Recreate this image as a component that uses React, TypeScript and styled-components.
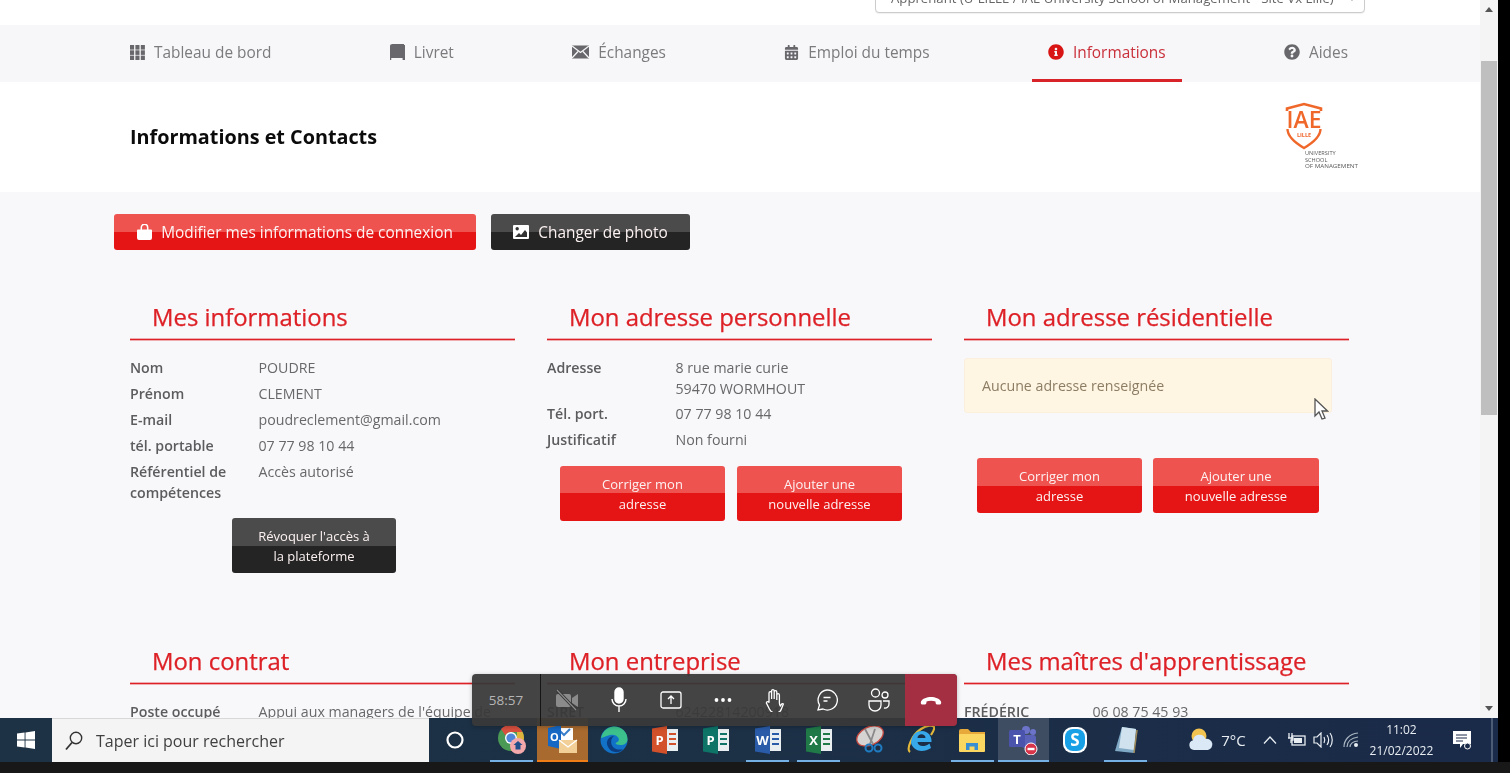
import React from "react";
import styled, { createGlobalStyle } from "styled-components";
import { FaCalendarAlt, FaInfoCircle, FaQuestionCircle } from "react-icons/fa";

const Global = createGlobalStyle`
  html, body { margin: 0; padding: 0; background: #181818; }
  * { box-sizing: border-box; }
  body { font-family: "Open Sans", "Liberation Sans", sans-serif; }
`;

const Stage = styled.div`
  position: relative; width: 1510px; height: 773px; overflow: hidden; background: #181818;
  display: flex; flex-direction: column;
`;
const Screen = styled.div`
  height: 762px; width: 100%; background: #000; flex: none; filter: blur(0.35px);
`;
const Monitor = styled.div`
  width: 1498px; height: 762px; display: flex; flex-direction: column;
`;
const Browser = styled.div`
  height: 718px; display: flex; flex: none; overflow: hidden;
`;
const Page = styled.div`
  width: 1480px; background: #f8f7f9; display: flex; flex-direction: column; overflow: hidden;
`;
const ScrollBar = styled.div`
  width: 18px; background: #f4f4f4; display: flex; flex-direction: column; align-items: stretch; padding-top: 7px;
`;
const Arrow = styled.div<{ $down?: boolean }>`
  width: 0; height: 0; margin: 0 auto; border-left: 4px solid transparent; border-right: 4px solid transparent;
  ${p => p.$down ? "border-top: 5px solid #555; margin-top: auto; margin-bottom: 7px;" : "border-bottom: 5px solid #555;"}
`;
const Thumb = styled.div`
  height: 354px; margin: 49px 1px 0; background: #bfbfbf;
`;
const TopStrip = styled.div`
  height: 25px; flex: none; background: #fff; display: flex; justify-content: flex-end; padding-right: 115px; overflow: hidden;
`;
const SelectBox = styled.div`
  width: 490px; height: 33px; margin-top: -20px; border: 1px solid #ccc; border-radius: 4px; background: #fff;
  display: flex; align-items: center; justify-content: space-between; padding: 3px 8px 0 15px;
  font-size: 13.2px; color: #666; white-space: nowrap; box-shadow: 0 1px 1px rgba(0,0,0,.06);
`;
const Nav = styled.nav`
  height: 57px; flex: none; background: #f7f6f8; display: flex; justify-content: space-between; padding: 0 116px 0 114px;
`;
const NavItem = styled.div<{ $active?: boolean }>`
  height: 57px; padding: 0 16px; display: flex; align-items: center; gap: 9px; font-size: 15.4px; white-space: nowrap;
  color: ${p => (p.$active ? "#c9303a" : "#7b7b7f")};
  border-bottom: 3px solid ${p => (p.$active ? "#d9232a" : "transparent")};
  & > svg { flex: none; color: ${p => (p.$active ? "#d81414" : "#68686c")}; }
`;
const HeaderBand = styled.header`
  height: 110px; flex: none; background: #fff; display: flex; align-items: center; justify-content: space-between;
  padding: 0 120px 0 130px;
`;
const Title = styled.h1`
  margin: 0; font-size: 19.8px; font-weight: 700; color: #0b0b0b; line-height: 1;
`;
const Main = styled.main`
  padding: 22px 0 0 114px; display: flex; flex-direction: column;
`;
const ActionRow = styled.div`
  display: flex; gap: 15px; height: 36px; flex: none;
`;
const splitBg = (dark?: boolean) =>
  dark
    ? "linear-gradient(#4b4b4b 0 50%, #242424 50% 100%)"
    : "linear-gradient(#ee5350 0 50%, #e51515 50% 100%)";
const WideButton = styled.div<{ $dark?: boolean; $w: number }>`
  width: ${p => p.$w}px; height: 36px; border-radius: 3px; background: ${p => splitBg(p.$dark)};
  display: flex; align-items: center; justify-content: center; gap: 9px;
  color: #fdf2f2; font-size: 15.4px; white-space: nowrap;
`;
const StackButton = styled.div<{ $dark?: boolean; $w?: number }>`
  width: ${p => p.$w ?? 165}px; height: 55px; border-radius: 3px; background: ${p => splitBg(p.$dark)};
  display: flex; flex-direction: column; align-items: center; justify-content: center;
  color: #fdf2f2; font-size: 13px; line-height: 20px; text-align: center;
`;
const Sections = styled.div<{ $top: number; $h?: number }>`
  margin: ${p => p.$top}px 0 0 16px; display: grid; grid-template-columns: repeat(3, 385px); column-gap: 32px;
  ${p => (p.$h ? `height: ${p.$h}px;` : "")} flex: none;
`;
const Column = styled.section`
  display: flex; flex-direction: column;
`;
const Heading = styled.h2`
  margin: 0; height: 46px; padding: 0 0 0 22px; font-size: 23.9px; font-weight: 400; line-height: 46px; color: #dd2127;
  -webkit-text-stroke: 0.25px #dd2127;
  border-bottom: 1px solid #dd2127; box-shadow: 0 1px 0 rgba(221,33,39,.35), inset 0 -1px 0 rgba(221,33,39,.35);
  white-space: nowrap;
`;
const Rows = styled.dl`
  margin: 17px 0 0; display: grid; grid-template-columns: 128.5px 1fr; row-gap: 5px; font-size: 14.2px; line-height: 21px;
`;
const Label = styled.dt`
  font-weight: 600; color: #5c5c5e; margin: 0;
`;
const Value = styled.dd<{ $tight?: boolean }>`
  margin: 0 0 ${p => (p.$tight ? "-1px" : "0")}; color: #68686a; white-space: nowrap;
`;
const ButtonRow = styled.div<{ $top: number; $left: number; $gap?: number }>`
  display: flex; gap: ${p => p.$gap ?? 11}px; margin: ${p => p.$top}px 0 0 ${p => p.$left}px;
`;
const Notice = styled.div`
  width: 368px; height: 55px; margin-top: 18px; padding: 0 17px 1px; background: #fff5e3; border: 1px solid #fbf0dc; border-radius: 3px;
  display: flex; align-items: center; font-size: 14.2px; color: #8c7d63;
`;
const Cursor = styled.svg`
  position: absolute; left: 1314px; top: 398px; width: 15px; height: 23px;
`;
const Taskbar = styled.footer`
  height: 44px; flex: none; display: flex; align-items: stretch;
  background: linear-gradient(90deg, #1d3244 0%, #1c3046 50%, #1a2a49 100%); position: relative;
`;
const StartCell = styled.div`
  width: 52px; display: flex; align-items: center; justify-content: center;
`;
const Search = styled.div`
  width: 377px; background: #f4f4f4; border-top: 1px solid #d8d8d8; display: flex; align-items: center; gap: 13px; padding-left: 13px;
  font-size: 16px; color: #3f3f3f; white-space: nowrap;
`;
const TaskSlot = styled.div<{ $state?: "run" | "act" | "hot"; $w?: number; $mr?: number }>`
  width: ${p => p.$w ?? 51.2}px; margin-right: ${p => p.$mr ?? 0}px; flex: none; display: flex; align-items: center; justify-content: center;
  ${p => p.$state === "run" ? "background: linear-gradient(#76b1e6, #76b1e6) bottom center / 43px 2px no-repeat;" : ""}
  ${p => p.$state === "act" ? "background: #a86a2e; box-shadow: inset 0 -2px 0 #f07d16;" : ""}
  ${p => p.$state === "hot" ? "background: #3e4d62; box-shadow: inset 0 -2px 0 #76b1e6;" : ""}
`;
const TrayCell = styled.div<{ $w: number; $ml?: number }>`
  width: ${p => p.$w}px; margin-left: ${p => p.$ml ?? 0}px; flex: none; display: flex; align-items: center; justify-content: center;
  color: #e8edf2; font-size: 15px; white-space: nowrap;
`;
const Clock = styled.div`
  display: flex; flex-direction: column; align-items: center; font-size: 12px; line-height: 21px; color: #e8edf2; white-space: nowrap;
`;
const EdgeLine = styled.div`
  position: absolute; right: 5px; top: 0; bottom: 0; width: 2px; background: #4d5c75;
`;
const CallBar = styled.div`
  position: absolute; left: 472px; top: 674px; width: 485px; height: 52px; border-radius: 4px; overflow: hidden;
  background: rgba(56, 56, 56, 0.94); display: flex; align-items: stretch; color: #fff;
  box-shadow: 0 1px 4px rgba(0,0,0,.25);
`;
const Timer = styled.div`
  width: 69px; border-right: 1px solid #151515; display: flex; align-items: center; justify-content: center; font-size: 13.5px; font-weight: 400; color: #b5b5b5; flex: none;
`;
const CallButton = styled.div`
  width: 52px; flex: none; display: flex; align-items: center; justify-content: center;
`;
const CallIcons = styled.div`
  flex: 1; display: flex;
`;
const Hangup = styled.div`
  width: 52px; flex: none; background: #a52f42; display: flex; align-items: center; justify-content: center;
`;

const ThIcon = () => (
  <svg width="15" height="15" viewBox="0 0 15 15" fill="currentColor">
    {[0, 5.4, 10.8].map(x => [0, 5.3, 10.6].map(y => <rect key={`${x}-${y}`} x={x} y={y} width="4.1" height="4.6" />))}
  </svg>
);
const BookIcon = () => (
  <svg width="15" height="16" viewBox="0 0 15 16" fill="currentColor">
    <path d="M0 2C0 .8 1 0 2.500 0H14v14H2.500C1.500 14 1 14.300 1 15s.5 1 1.500 1H0z" />
    <rect x="12.600" y="1" width="2.400" height="15" />
  </svg>
);
const MailIcon = () => (
  <svg width="17" height="14" viewBox="0 0 17 14">
    <rect y="0.5" width="17" height="13" fill="currentColor" />
    <path d="M0 1l8.500 6.500L17 1M0 13l6-6.500M17 13l-6-6.500" stroke="#f7f6f8" strokeWidth="1.300" fill="none" />
  </svg>
);
const BagIcon = () => (
  <svg width="15" height="16" viewBox="0 0 15 16" fill="#fff">
    <path d="M1 5.500h13a1 1 0 0 1 1 1V14a2 2 0 0 1-2 2H2a2 2 0 0 1-2-2V6.500a1 1 0 0 1 1-1z" />
    <path d="M4.300 6V3.500a3.200 3.200 0 0 1 6.400 0V6" fill="none" stroke="#fff" strokeWidth="1.500" />
  </svg>
);
const PhotoIcon = () => (
  <svg width="16" height="14" viewBox="0 0 16 14">
    <rect width="16" height="14" rx="1" fill="#fff" />
    <circle cx="4.200" cy="3.800" r="1.700" fill="#333" />
    <path d="M2 12l4-4 2 2 4-5 2 2.500V12z" fill="#333" />
  </svg>
);
const Logo = () => (
  <svg width="76" height="70" viewBox="0 0 76 70">
    <path d="M4 9V6.500L21 2l17 4.500V9" transform="translate(-1 0)" fill="none" stroke="#f0672a" strokeWidth="2.600" />
    <path d="M3.500 27c0 8 8 14 16.500 19 8.500-5 16.500-11 16.500-19" fill="none" stroke="#f0672a" strokeWidth="2.400" />
    <text x="20" y="26" textAnchor="middle" fontFamily="Open Sans, sans-serif" fontSize="24" fontWeight="600" fill="#f0672a" textLength="35" lengthAdjust="spacingAndGlyphs">IAE</text>
    <text x="20" y="35" textAnchor="middle" fontFamily="Open Sans, sans-serif" fontSize="5.500" fontWeight="700" fill="#f0672a">LILLE</text>
    <g fontFamily="Open Sans, sans-serif" fontSize="5.600" fill="#5a5a5a">
      <text x="21" y="53">UNIVERSITY</text>
      <text x="21" y="59.500">SCHOOL</text>
      <text x="21" y="66" textLength="53" lengthAdjust="spacingAndGlyphs">OF MANAGEMENT</text>
    </g>
  </svg>
);
const WinLogo = () => (
  <svg width="18" height="18" viewBox="0 0 18 18" fill="#fff">
    <path d="M0 2.600 7.600 1.500v7H0zM8.500 1.400 18 0v8.500H8.500zM0 9.500h7.600v7L0 15.400zM8.500 9.500H18V18l-9.500-1.400z" />
  </svg>
);
const SearchGlass = () => (
  <svg width="18" height="20" viewBox="0 0 18 20" fill="none" stroke="#333" strokeWidth="1.400">
    <circle cx="11" cy="7" r="5.700" />
    <path d="M7 11.500 1 18.500" strokeWidth="1.800" />
  </svg>
);
const Chrome = () => (
  <svg width="30" height="32" viewBox="0 0 30 32">
    <circle cx="14" cy="14" r="13" fill="#4a9a55" />
    <path d="M14 1a13 13 0 0 1 11.500 7H14a6 6 0 0 0-5.500 3.500L4 5a13 13 0 0 1 10-4z" fill="#d9503f" />
    <path d="M25.500 8A13 13 0 0 1 14 27l6-10V8z" fill="#e0b33c" />
    <circle cx="14" cy="14" r="6" fill="#fff" />
    <circle cx="14" cy="14" r="4.600" fill="#5087d8" />
    <circle cx="21" cy="22" r="8" fill="#f3a9ac" />
    <path d="M21 17l4.500 4h-2v4.500h-5V21h-2z" fill="#1f4f8a" />
  </svg>
);
const Outlook = () => (
  <svg width="30" height="30" viewBox="0 0 30 30">
    <rect x="10" y="3" width="15" height="13" fill="#fff" />
    <path d="M12 6l4 4 6-6" stroke="#3a7fc9" strokeWidth="2" fill="none" />
    <path d="M0 3l13-3v24L0 21z" fill="#1668c4" />
    <text x="6.500" y="15.500" textAnchor="middle" fontFamily="Open Sans, sans-serif" fontSize="11" fontWeight="700" fill="#fff">O</text>
    <rect x="11" y="15" width="18" height="13" fill="#f2cf97" />
    <path d="M11 15l9 7 9-7" stroke="#fff" strokeWidth="1.200" fill="none" />
  </svg>
);
const Edge = () => (
  <svg width="28" height="28" viewBox="0 0 28 28">
    <circle cx="14" cy="14" r="13.500" fill="#1272c8" />
    <path d="M1 12C3 4 9 .5 14 .5c8 0 13.500 6 13.500 12.500 0 4-3 6-7 6-3 0-5-1-5-2 3-1 4-3 3-5C17 9 13 8 10 9c-5 1.500-8 3-9 3z" fill="#3cc18c" />
    <path d="M8 21c-3-6 1-11 6-11-3 2-4 7-1 11 3 3 7 3 10 2-4 5-12 4-15-2z" fill="#0c3d80" />
  </svg>
);
const OfficeDoc = ({ bg, letter }: { bg: string; letter: string }) => (
  <svg width="26" height="28" viewBox="0 0 26 28">
    <rect x="10" y="3" width="16" height="22" fill="#e9eef0" />
    <path d="M17 8h7M17 13h7M17 18h7" stroke={bg} strokeWidth="1.800" fill="none" />
    <path d="M0 2.500 15 0v28L0 25.500z" fill={bg} />
    <text x="7.500" y="19" textAnchor="middle" fontFamily="Open Sans, sans-serif" fontSize="13" fontWeight="700" fill="#fff">{letter}</text>
  </svg>
);
const Snip = () => (
  <svg width="30" height="28" viewBox="0 0 30 28">
    <ellipse cx="15" cy="10" rx="14" ry="9" transform="rotate(-25 15 10)" fill="#d6d3d3" stroke="#c8493f" strokeWidth="1.300" />
    <path d="M10 3l8 15M20 3l-5 15" stroke="#8a8a8a" strokeWidth="1.800" />
    <circle cx="14" cy="22" r="3.500" fill="none" stroke="#1f7cc2" strokeWidth="2" />
    <circle cx="23" cy="22" r="3.500" fill="none" stroke="#1f7cc2" strokeWidth="2" />
  </svg>
);
const IE = () => (
  <svg width="28" height="30" viewBox="0 0 28 30">
    <path d="M3 27C-1 24 5 10 14 4c6-4 12-4 13-2 1 2-1 5-3 8" fill="none" stroke="#e5b93a" strokeWidth="2.200" />
    <path d="M4 17C5 9 10 6 15 6c6 0 10 5 9.500 11H10.500c.5 4 6 6 12 1.500L24 23c-6 4-13 4-17 0-2-2-3-4-3-6zm6.500-4h8c0-5-8-5-8 0z" fill="#37a8ea" />
  </svg>
);
const Folder = () => (
  <svg width="26" height="24" viewBox="0 0 26 24">
    <path d="M0 3a2 2 0 0 1 2-2h7l3 3h14v5H0z" fill="#e7a93a" />
    <rect y="6" width="26" height="18" rx="1" fill="#fbd660" />
    <path d="M7 22v-7h12v7h-3.500v-3.500h-5V22z" fill="#3a8fd4" />
  </svg>
);
const Teams = () => (
  <svg width="30" height="30" viewBox="0 0 30 30">
    <circle cx="18" cy="5" r="4" fill="#6b74c9" />
    <circle cx="25" cy="7" r="3" fill="#6b74c9" />
    <rect x="14" y="10" width="14" height="13" rx="3" fill="#5a63b8" />
    <rect x="1" y="5" width="16" height="17" rx="1.500" fill="#4a54ad" />
    <text x="9" y="18.500" textAnchor="middle" fontFamily="Open Sans, sans-serif" fontSize="13" fontWeight="700" fill="#fff">T</text>
    <circle cx="23" cy="24" r="6" fill="#d8354a" stroke="#fff" strokeWidth="1" />
    <rect x="19.500" y="22.800" width="7" height="2.400" fill="#fff" />
  </svg>
);
const Skype = () => (
  <svg width="26" height="28" viewBox="0 0 26 28">
    <rect x="1" y="1" width="24" height="26" rx="9" fill="#fff" />
    <rect x="3" y="3" width="20" height="22" rx="8" fill="#18a0e6" />
    <text x="13" y="20" textAnchor="middle" fontFamily="Open Sans, sans-serif" fontSize="17" fontWeight="700" fill="#fff">S</text>
  </svg>
);
const Note = () => (
  <svg width="26" height="28" viewBox="0 0 26 28">
    <path d="M9 1l14 2-2 24-19-2z" fill="#7fa9c4" />
    <path d="M9 1l14 2-2 21-15-2z" fill="#cfe2ee" />
    <path d="M21 27l3-23" stroke="#a08a5a" strokeWidth="1.500" />
  </svg>
);
const Weather = () => (
  <svg width="26" height="24" viewBox="0 0 26 24">
    <circle cx="11" cy="8" r="7.500" fill="#f3c34f" />
    <path d="M6 22a5 5 0 0 1-1-9.800A6.500 6.500 0 0 1 17.500 11 5.500 5.500 0 0 1 20 22z" fill="#dbe9f7" />
  </svg>
);
const NotifIcon = () => (
  <svg width="18" height="19" viewBox="0 0 18 19">
    <path d="M0 0h18v13h-8l-3 4v-4H0z" fill="#fff" />
    <path d="M3 4h11M3 7h11M3 10h7" stroke="#1a2a49" strokeWidth="1.200" />
    <circle cx="14.500" cy="15" r="3" fill="#1a2a49" stroke="#fff" />
  </svg>
);
const Battery = () => (
  <svg width="20" height="16" viewBox="0 0 20 16" fill="none" stroke="#e8edf2" strokeWidth="1.300">
    <rect x="5" y="4" width="13" height="9" />
    <rect x="7" y="6" width="8" height="5" fill="#e8edf2" stroke="none" />
    <path d="M2 1v5M5 1v5M1 6h5v2H4v3" />
  </svg>
);
const Volume = () => (
  <svg width="20" height="16" viewBox="0 0 20 16" fill="none" stroke="#e8edf2" strokeWidth="1.200">
    <path d="M1 5h3l4-4v14l-4-4H1z" />
    <path d="M11 5c1 2 1 4 0 6M14 3c2 3 2 7 0 10M17 1c3 4 3 10 0 14" />
  </svg>
);
const Wifi = () => (
  <svg width="16" height="16" viewBox="0 0 16 16" fill="none" stroke="#aab6c2" strokeWidth="1.200">
    <path d="M1 15C1 8 6 2 15 1M4 15c0-5 4-9 11-10M7 15c0-3 3-6 8-6" />
    <circle cx="13" cy="13" r="2" fill="#e8edf2" stroke="none" />
  </svg>
);
const Camera = () => (
  <svg width="26" height="24" viewBox="0 0 26 24">
    <rect x="2" y="6" width="15" height="13" rx="2" fill="#8b8b8b" />
    <path d="M18 10l6-4v13l-6-4z" fill="#8b8b8b" />
    <path d="M3 2l19 20" stroke="#333" strokeWidth="3" />
    <path d="M3 2l19 20" stroke="#8b8b8b" strokeWidth="1.200" />
  </svg>
);
const Mic = () => (
  <svg width="18" height="26" viewBox="0 0 18 26" fill="none" stroke="#fff" strokeWidth="1.400">
    <rect x="5" y="1" width="8" height="15" rx="4" fill="#fff" />
    <path d="M2 12a7 7 0 0 0 14 0M9 19v6" />
  </svg>
);
const Share = () => (
  <svg width="22" height="20" viewBox="0 0 22 20" fill="none" stroke="#fff" strokeWidth="1.300">
    <rect x="1" y="2" width="20" height="16" rx="2" />
    <path d="M11 14V6M8 9l3-3 3 3" />
  </svg>
);
const Hand = () => (
  <svg width="20" height="24" viewBox="0 0 20 24" fill="none" stroke="#fff" strokeWidth="1.300">
    <path d="M4 14V5a1.300 1.300 0 0 1 2.600 0v6-8a1.300 1.300 0 0 1 2.600 0v8-7a1.300 1.300 0 0 1 2.600 0v8-5a1.300 1.300 0 0 1 2.600 0v8c0 2 1 3 1 3 1-2 2-3 3-2l-2 5c-1 3-3 4-6 4-4 0-5-2-6-4l-3-6c0-1 1-2 2-1z" />
  </svg>
);
const Chat = () => (
  <svg width="22" height="22" viewBox="0 0 22 22" fill="none" stroke="#fff" strokeWidth="1.300">
    <path d="M11 1a10 10 0 1 1-4 19l-5 1 1.500-5A10 10 0 0 1 11 1z" />
    <path d="M7.500 8.500h7M7.500 12h4" />
  </svg>
);
const People = () => (
  <svg width="22" height="24" viewBox="0 0 22 24" fill="none" stroke="#fff" strokeWidth="1.300">
    <circle cx="7.500" cy="5" r="4" />
    <circle cx="17" cy="7" r="3" />
    <path d="M1 13h12v4a6 6 0 0 1-12 0zM15 13h6v3a4 4 0 0 1-5 4" />
  </svg>
);
const MouseCursor = () => (
  <Cursor viewBox="0 0 15 23">
    <path d="M1 1v17l4-4 3 7 3-1-3-7h5.500z" fill="#fff" stroke="#555" strokeWidth="1.300" />
  </Cursor>
);

export default function App() {
  return (
    <Stage>
      <Global />
      <Screen>
        <Monitor>
          <Browser>
            <Page>
              <TopStrip>
                <SelectBox>
                  <span>Apprenant (U-LILLE / IAE University School of Management - Site Vx Lille)</span>
                  <svg width="8" height="5" viewBox="0 0 8 5" fill="none" stroke="#666" strokeWidth="1.200"><path d="M.5.500 4 4 7.500.500" /></svg>
                </SelectBox>
              </TopStrip>
              <Nav>
                <NavItem><ThIcon />Tableau de bord</NavItem>
                <NavItem><BookIcon />Livret</NavItem>
                <NavItem><MailIcon />Échanges</NavItem>
                <NavItem><FaCalendarAlt size={15} />Emploi du temps</NavItem>
                <NavItem $active><FaInfoCircle size={16} />Informations</NavItem>
                <NavItem><FaQuestionCircle size={16} />Aides</NavItem>
              </Nav>
              <HeaderBand>
                <Title>Informations et Contacts</Title>
                <Logo />
              </HeaderBand>
              <Main>
                <ActionRow>
                  <WideButton $w={362}><BagIcon />Modifier mes informations de connexion</WideButton>
                  <WideButton $w={199} $dark><PhotoIcon />Changer de photo</WideButton>
                </ActionRow>
                <Sections $top={44} $h={344}>
                  <Column>
                    <Heading>Mes informations</Heading>
                    <Rows>
                      <Label>Nom</Label><Value>POUDRE</Value>
                      <Label>Prénom</Label><Value>CLEMENT</Value>
                      <Label>E-mail</Label><Value>poudreclement@gmail.com</Value>
                      <Label>tél. portable</Label><Value>07 77 98 10 44</Value>
                      <Label>Référentiel de compétences</Label><Value>Accès autorisé</Value>
                    </Rows>
                    <ButtonRow $top={15} $left={102}>
                      <StackButton $dark $w={164}>Révoquer l'accès à<br />la plateforme</StackButton>
                    </ButtonRow>
                  </Column>
                  <Column>
                    <Heading>Mon adresse personnelle</Heading>
                    <Rows>
                      <Label>Adresse</Label><Value $tight>8 rue marie curie<br />59470 WORMHOUT</Value>
                      <Label>Tél. port.</Label><Value>07 77 98 10 44</Value>
                      <Label>Justificatif</Label><Value>Non fourni</Value>
                    </Rows>
                    <ButtonRow $top={16} $left={13} $gap={12}>
                      <StackButton>Corriger mon<br />adresse</StackButton>
                      <StackButton>Ajouter une<br />nouvelle adresse</StackButton>
                    </ButtonRow>
                  </Column>
                  <Column>
                    <Heading>Mon adresse résidentielle</Heading>
                    <Notice>Aucune adresse renseignée</Notice>
                    <ButtonRow $top={45} $left={13}>
                      <StackButton>Corriger mon<br />adresse</StackButton>
                      <StackButton $w={166}>Ajouter une<br />nouvelle adresse</StackButton>
                    </ButtonRow>
                  </Column>
                </Sections>
                <Sections $top={0}>
                  <Column>
                    <Heading>Mon contrat</Heading>
                    <Rows>
                      <Label>Poste occupé</Label><Value>Appui aux managers de l'équipe de</Value>
                    </Rows>
                  </Column>
                  <Column>
                    <Heading>Mon entreprise</Heading>
                    <Rows>
                      <Label>SIRET</Label><Value>62422814200918</Value>
                    </Rows>
                  </Column>
                  <Column>
                    <Heading>Mes maîtres d'apprentissage</Heading>
                    <Rows>
                      <Label>FRÉDÉRIC</Label><Value>06 08 75 45 93</Value>
                    </Rows>
                  </Column>
                </Sections>
              </Main>
            </Page>
            <ScrollBar>
              <Arrow />
              <Thumb />
              <Arrow $down />
            </ScrollBar>
          </Browser>
          <Taskbar>
            <StartCell><WinLogo /></StartCell>
            <Search><SearchGlass />Taper ici pour rechercher</Search>
            <TaskSlot $w={52} $mr={5}>
              <svg width="18" height="18" viewBox="0 0 18 18" fill="none" stroke="#fff" strokeWidth="2.200"><circle cx="9" cy="9" r="7.500" /></svg>
            </TaskSlot>
            <TaskSlot $state="run"><Chrome /></TaskSlot>
            <TaskSlot $state="act"><Outlook /></TaskSlot>
            <TaskSlot><Edge /></TaskSlot>
            <TaskSlot><OfficeDoc bg="#d2502a" letter="P" /></TaskSlot>
            <TaskSlot><OfficeDoc bg="#0e7468" letter="P" /></TaskSlot>
            <TaskSlot $state="run"><OfficeDoc bg="#2a5ba8" letter="W" /></TaskSlot>
            <TaskSlot $state="run"><OfficeDoc bg="#1f7a48" letter="X" /></TaskSlot>
            <TaskSlot><Snip /></TaskSlot>
            <TaskSlot><IE /></TaskSlot>
            <TaskSlot $state="run"><Folder /></TaskSlot>
            <TaskSlot $state="hot"><Teams /></TaskSlot>
            <TaskSlot><Skype /></TaskSlot>
            <TaskSlot $state="run"><Note /></TaskSlot>
            <TrayCell $w={28} $ml={36}><Weather /></TrayCell>
            <TrayCell $w={26} $ml={5}>7°C</TrayCell>
            <TrayCell $w={26} $ml={11}>
              <svg width="14" height="8" viewBox="0 0 14 8" fill="none" stroke="#e8edf2" strokeWidth="1.300"><path d="M1 7.500 7 1l6 6.500" /></svg>
            </TrayCell>
            <TrayCell $w={26} $ml={1}><Battery /></TrayCell>
            <TrayCell $w={26}><Volume /></TrayCell>
            <TrayCell $w={26} $ml={2}><Wifi /></TrayCell>
            <TrayCell $w={68} $ml={3}><Clock><span>11:02</span><span>21/02/2022</span></Clock></TrayCell>
            <TrayCell $w={40} $ml={7}><NotifIcon /></TrayCell>
            <EdgeLine />
          </Taskbar>
        </Monitor>
      </Screen>
      <MouseCursor />
      <CallBar>
        <Timer>58:57</Timer>
        <CallIcons>
          <CallButton><Camera /></CallButton>
          <CallButton><Mic /></CallButton>
          <CallButton><Share /></CallButton>
          <CallButton>
            <svg width="18" height="4" viewBox="0 0 18 4" fill="#fff"><circle cx="2.500" cy="2" r="1.900" /><circle cx="9" cy="2" r="1.900" /><circle cx="15.500" cy="2" r="1.900" /></svg>
          </CallButton>
          <CallButton><Hand /></CallButton>
          <CallButton><Chat /></CallButton>
          <CallButton><People /></CallButton>
        </CallIcons>
        <Hangup>
          <svg width="22" height="10" viewBox="0 0 22 10" fill="#fff"><path d="M1 6.500C4 .5 18 .5 21 6.500c.5 1 0 3-1 3h-3c-1 0-1.500-1-1.500-3-2.500-1-6.500-1-9 0 0 2-.5 3-1.500 3H2c-1 0-1.500-2-1-3z" /></svg>
        </Hangup>
      </CallBar>
    </Stage>
  );
}
